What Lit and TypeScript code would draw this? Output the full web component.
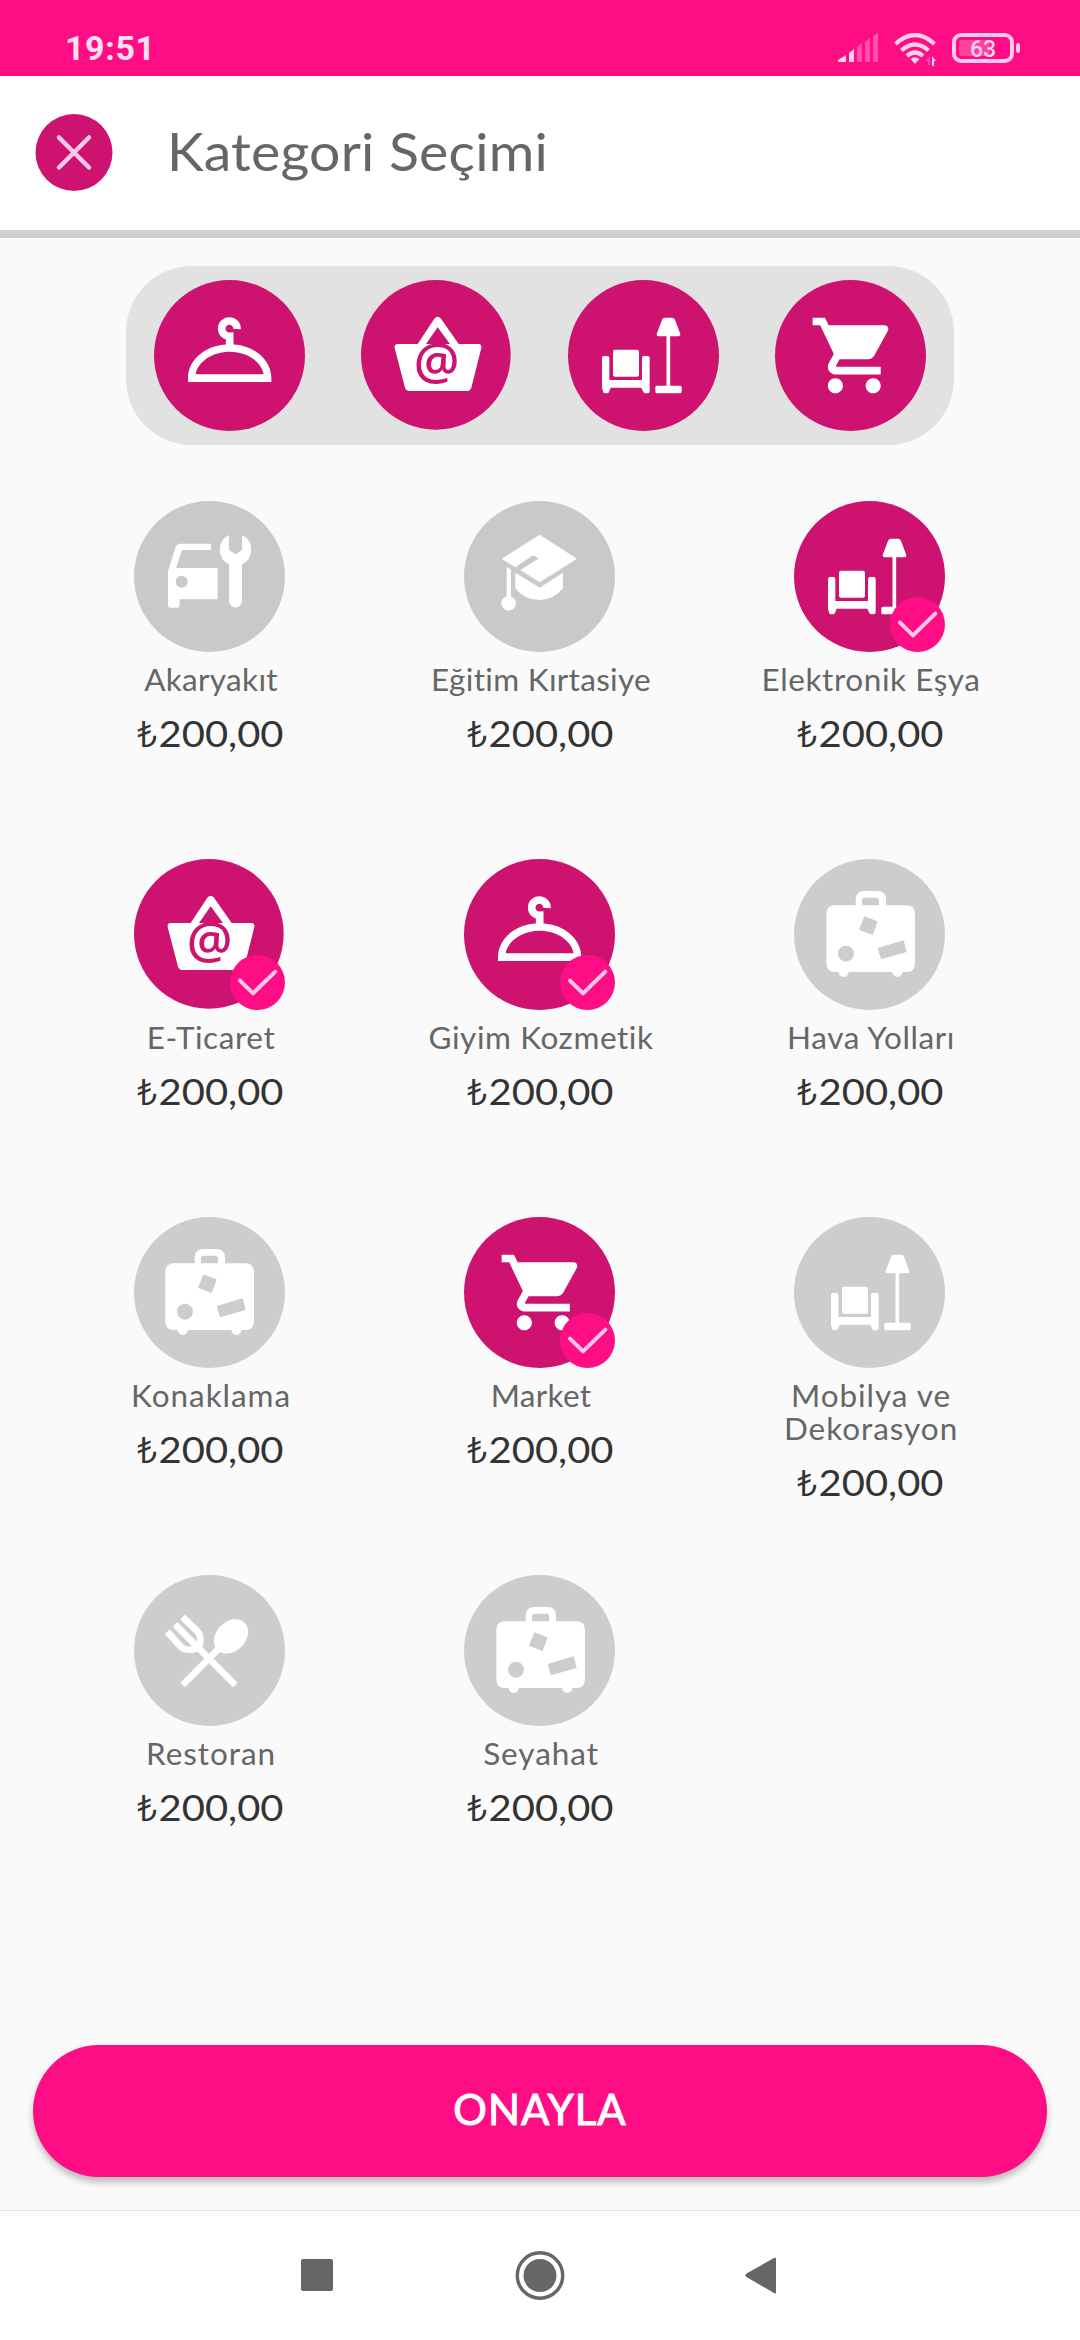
import { LitElement, html, svg, css } from "lit";
import { customElement, property } from "lit/decorators.js";
import { classMap } from "lit/directives/class-map.js";

const seatShapes = svg`
  <path d="M282 119Q285 113 291 113H312Q318 113 321 119L337 162Q338 169 332 169H271Q265 169 266 162Z"/>
  <rect x="295.500" y="165" width="11" height="155"/>
  <rect x="262" y="317" width="79" height="23" rx="5"/>
  <rect x="135" y="209" width="78" height="81" rx="6"/>
  <path d="M102 234Q102 228 108 228H118Q124 228 124 234V300H222V234Q222 228 228 228H239Q245 228 245 234V334Q245 340 239 340H232Q228 340 226 336L220 323H128L123 336Q121 340 117 340H110Q105 340 105 334L102 325Z"/>`;

const caseShapes = svg`
  <path fill-rule="evenodd" d="M185 139V122Q185 96 211 96H250Q276 96 276 122V139H337Q363 139 363 165V313Q363 339 337 339H325A15 15 0 0 1 295 339H164A15 15 0 0 1 134 339H123Q97 339 97 313V165Q97 139 123 139Z
    M204 139H255V124Q255 116 247 116H212Q204 116 204 124Z
    M211 172L251 187L236 228L195 212Z
    M251 267L329 244L338 279L261 301Z
    M180 284A24 24 0 1 0 132 284A24 24 0 1 0 180 284Z"/>`;

const glyphs: Record<string, unknown> = {
  hanger: svg`
    <path fill-rule="evenodd" d="M102 306V292C104 235 160 193 227 193S350 235 352 292V306ZM125 283H329C322 243 277 215 227 215S132 243 125 283Z"/>
    <path class="line" stroke-width="23" d="M249 147A23 23 0 1 0 227 169V200"/>`,
  basket: svg`
    <path fill-rule="evenodd" d="M110 192H170L221 115Q230 105 239 115L293 192H352Q363 193 361 204L331 323Q327 333 317 333H147Q136 333 132 323L101 204Q99 193 110 192ZM195 192H267L230 142Z"/>
    <text class="at" x="226.500" y="298" text-anchor="middle">@</text>`,
  seat: seatShapes,
  seatRight: svg`<g transform="translate(9 0)">${seatShapes}</g>`,
  cart: svg`
    <path transform="translate(101.600 90.300) scale(11.350)" d="M7 18c-1.100 0-1.990.9-1.990 2S5.900 22 7 22s2-.9 2-2-.9-2-2-2zM1 2v2h2l3.600 7.590-1.350 2.450c-.16.28-.25.61-.25.96 0 1.100.9 2 2 2h12v-2H7.420c-.14 0-.25-.11-.25-.25l.03-.12.9-1.630h7.450c.75 0 1.410-.41 1.750-1.030l3.580-6.490c.08-.14.12-.31.12-.48 0-.55-.45-1-1-1H5.210l-.94-2H1zm16 16c-1.100 0-1.990.9-1.990 2s.89 2 1.990 2 2-.9 2-2-.9-2-2-2z"/>`,
  car: svg`
    <path fill-rule="evenodd" d="M231 128V147H144L126 201H251V295H137V312Q137 320 129 320H111Q102 320 102 312V210L124 140Q128 128 141 128ZM161 242A18 18 0 1 0 125 242A18 18 0 1 0 161 242Z"/>
    <path d="M285 102A49 49 0 0 0 285 190V300A19.500 19.500 0 0 0 324 300V190A49 49 0 0 0 324 102V147L304.500 160L285 147Z"/>`,
  cap: svg`
    <path d="M227 101L339 173L227 244L169 207L223 173L214 166Q209 163 203 166L154 199L113 173Z"/>
    <path d="M154 215L227 260L297 215V262Q270 297 227 297Q180 297 154 262Z"/>
    <path d="M128 198L141 206V292H128Z"/>
    <circle cx="134" cy="307" r="22"/>`,
  luggage: caseShapes,
  luggageLeft: svg`<g transform="translate(-3 0)">${caseShapes}</g>`,
  cutlery: svg`
    <ellipse cx="291" cy="184" rx="58" ry="44" transform="rotate(-45 291 184)"/>
    <path class="line" stroke-width="20" d="M255 220L146 330M304 330L123 148M146 126L190 169Q202 182 198 206L194 218M100 170L142 217Q152 226 172 224L194 219"/>`,
};

@customElement("category-icon")
class CategoryIcon extends LitElement {
  @property() name = "";
  @property() tone = "on";

  static styles = css`
    :host { display: block; width: 151px; height: 151px; }
    svg { display: block; width: 151px; height: 151px; fill: #fff; }
    .disc { fill: #cd136f; }
    .disc.muted { fill: #c9c9c9; }
    .disc.soft { fill: #cdcdcd; }
    .line { fill: none; stroke: #fff; }
    .at { font: 600 153px "Open Sans", "Noto Sans", sans-serif; fill: #cd136f; }
  `;

  render() {
    const r = this.name === "basket" ? 224.5 : 226.5;
    return html`<svg viewBox="0 0 453 453">
      <circle class=${classMap({ disc: true, [this.tone]: true })} cx=${r} cy=${r} r=${r}></circle>
      ${glyphs[this.name]}
    </svg>`;
  }
}

interface Category {
  label: string;
  icon: string;
  tone: "on" | "muted" | "soft";
  tracking: "normal" | "open" | "wide" | "wider";
}

const categories: Category[] = [
  { label: "Akaryakıt", icon: "car", tone: "muted", tracking: "normal" },
  { label: "Eğitim Kırtasiye", icon: "cap", tone: "muted", tracking: "normal" },
  { label: "Elektronik Eşya", icon: "seat", tone: "on", tracking: "open" },
  { label: "E-Ticaret", icon: "basket", tone: "on", tracking: "open" },
  { label: "Giyim Kozmetik", icon: "hanger", tone: "on", tracking: "open" },
  { label: "Hava Yolları", icon: "luggage", tone: "soft", tracking: "open" },
  { label: "Konaklama", icon: "luggageLeft", tone: "soft", tracking: "wide" },
  { label: "Market", icon: "cart", tone: "on", tracking: "normal" },
  { label: "Mobilya ve Dekorasyon", icon: "seatRight", tone: "soft", tracking: "wide" },
  { label: "Restoran", icon: "cutlery", tone: "soft", tracking: "wide" },
  { label: "Seyahat", icon: "luggage", tone: "soft", tracking: "wide" },
];

@customElement("app-root")
class AppRoot extends LitElement {
  static styles = css`
    :host {
      display: flex; flex-direction: column; width: 1080px; height: 2340px;
      background: #fafafa; overflow: hidden; font-family: Lato, "Open Sans", sans-serif;
    }
    * { box-sizing: border-box; }
    svg { display: block; }
    .status {
      height: 76px; flex: none; background: #ff0d84; display: flex; align-items: flex-start;
      justify-content: space-between; padding: 28px 59px 0 65px;
    }
    .clock { font: 700 34px/40px Roboto, sans-serif; letter-spacing: 0.6px; color: #ffe0f2; }
    .signals { display: flex; gap: 16px; padding-top: 5px; }
    .faint { fill: #ff4fac; }
    .level { font: 500 23px Roboto, sans-serif; fill: #ffd6ed; }
    .header {
      height: 162px; flex: none; background: #fff; border-bottom: 8px solid #d0d0d0;
      display: flex; align-items: center; padding: 0 35px; gap: 54px;
    }
    .header h1 {
      margin: 0; padding-bottom: 4px; font-weight: 400; font-size: 53px; line-height: 64px;
      color: #666; letter-spacing: 0.2px; transform: scaleX(1.045); transform-origin: left;
    }
    .selected {
      flex: none; width: 828px; height: 179px; margin: 28px auto 0; border-radius: 66px;
      background: #e2e2e2; display: grid; grid-template-columns: repeat(4, 207px);
      place-items: center;
    }
    .grid {
      flex: 1; display: grid; grid-template-columns: repeat(3, 330px); grid-auto-rows: 358px;
      justify-content: center; padding: 56px 1px 0 0;
    }
    .cell { display: flex; flex-direction: column; align-items: center; }
    .badge-box { position: relative; }
    .badge { position: absolute; right: 0; bottom: 0; width: 55px; height: 55px; }
    .label {
      margin-top: 11px; width: 236px; padding-left: 2px; text-align: center; font-size: 30px;
      line-height: 33px; color: #666; letter-spacing: 0.3px; transform: scaleX(1.05);
    }
    .label.open { letter-spacing: 0.55px; }
    .label.wide { letter-spacing: 0.9px; }
    .price {
      margin-top: 16px; font-size: 36px; line-height: 42px; color: #333;
      transform: scaleX(1.11);
    }
    .lira { font-family: Inter, Lato, sans-serif; font-weight: 300; }
    .confirm {
      flex: none; height: 132px; margin: 0 33px 33px; padding: 0 0 4px; border: 0; border-radius: 66px;
      background: #ff0d84; color: #fff; font: 400 42px/128px Lato, sans-serif; letter-spacing: 1px;
      -webkit-text-stroke: 1px #fff; box-shadow: 0 5px 7px rgba(0, 0, 0, 0.26);
    }
    .nav {
      flex: none; height: 130px; background: #fff; border-top: 1px solid #e0e0e0;
      display: flex; justify-content: center; align-items: center; gap: 180px;
    }
  `;

  private category(c: Category) {
    return html`<div class="cell">
      <div class="badge-box">
        <category-icon name=${c.icon} tone=${c.tone}></category-icon>
        ${c.tone === "on"
          ? html`<svg class="badge" viewBox="0 0 165 165">
              <circle cx="82.500" cy="82.500" r="82.500" fill="#ff0d84"></circle>
              <path d="M30 77L69 115L136 50" fill="none" stroke="#ffc8e8" stroke-width="12" stroke-linecap="round" stroke-linejoin="round"></path>
            </svg>`
          : null}
      </div>
      <div class="label ${c.tracking}">${c.label}</div>
      <div class="price"><span class="lira">₺</span>200,00</div>
    </div>`;
  }

  render() {
    return html`
      <div class="status">
        <span class="clock">19:51</span>
        <div class="signals">
          <svg width="41" height="30" fill="#ffd6ed">
            <path d="M1 29V27L9 22V29ZM12 29V20L17 16V29Z"></path>
            <path class="faint" d="M20 29V14L25 10V29ZM28 29V9L33 5V29ZM36 29V3L41 0V29Z"></path>
          </svg>
          <svg width="42" height="34" fill="none" stroke="#ffd0ea" stroke-width="4.200">
            <path d="M1.500 11Q21 -7 40.500 11M7.500 17.500Q21 5.500 34.500 17.500M13 23Q21 16 29 23"></path>
            <path d="M16.500 26Q21 22.500 25.500 26L21 31Z" fill="#ffd0ea" stroke="none"></path>
            <path d="M36 32V23L31.500 28H34V32Z" fill="#ff4fac" stroke="none"></path>
            <path d="M38 33V23L42 28H40V33Z" fill="#ffd0ea" stroke="none"></path>
          </svg>
          <svg width="69" height="31">
            <rect x="2" y="2" width="58" height="26" rx="7" fill="none" stroke="#ffc8e8" stroke-width="4"></rect>
            <rect x="7" y="7" width="31" height="16" rx="3" fill="#ff429f"></rect>
            <rect x="64" y="10" width="4" height="10" rx="2" fill="#ffc8e8"></rect>
            <text class="level" x="31" y="24" text-anchor="middle">63</text>
          </svg>
        </div>
      </div>
      <div class="header">
        <svg width="78" height="78" viewBox="0 0 78 78">
          <circle cx="39" cy="38.500" r="38.500" fill="#cd136f"></circle>
          <path d="M24 23.500L54 53.500M54 23.500L24 53.500" stroke="#ffc8e8" stroke-width="4.500" stroke-linecap="round"></path>
        </svg>
        <h1>Kategori Seçimi</h1>
      </div>
      <div class="selected">
        ${["hanger", "basket", "seat", "cart"].map((n) => html`<category-icon name=${n}></category-icon>`)}
      </div>
      <div class="grid">${categories.map((c) => this.category(c))}</div>
      <button class="confirm">ONAYLA</button>
      <div class="nav">
        <svg width="36" height="50"><rect x="2" y="8" width="32" height="32" rx="2" fill="#666"></rect></svg>
        <svg width="50" height="50">
          <circle cx="25" cy="24.500" r="22.700" fill="none" stroke="#666" stroke-width="3.400"></circle>
          <circle cx="25" cy="24.500" r="16.500" fill="#666"></circle>
        </svg>
        <svg width="36" height="50">
          <path d="M1.500 22.500L29 7Q31 6 31 8V41Q31 43.500 29 42L1.500 26Q-1 24.500 1.500 22.500Z" fill="#666"></path>
        </svg>
      </div>
    `;
  }
}
